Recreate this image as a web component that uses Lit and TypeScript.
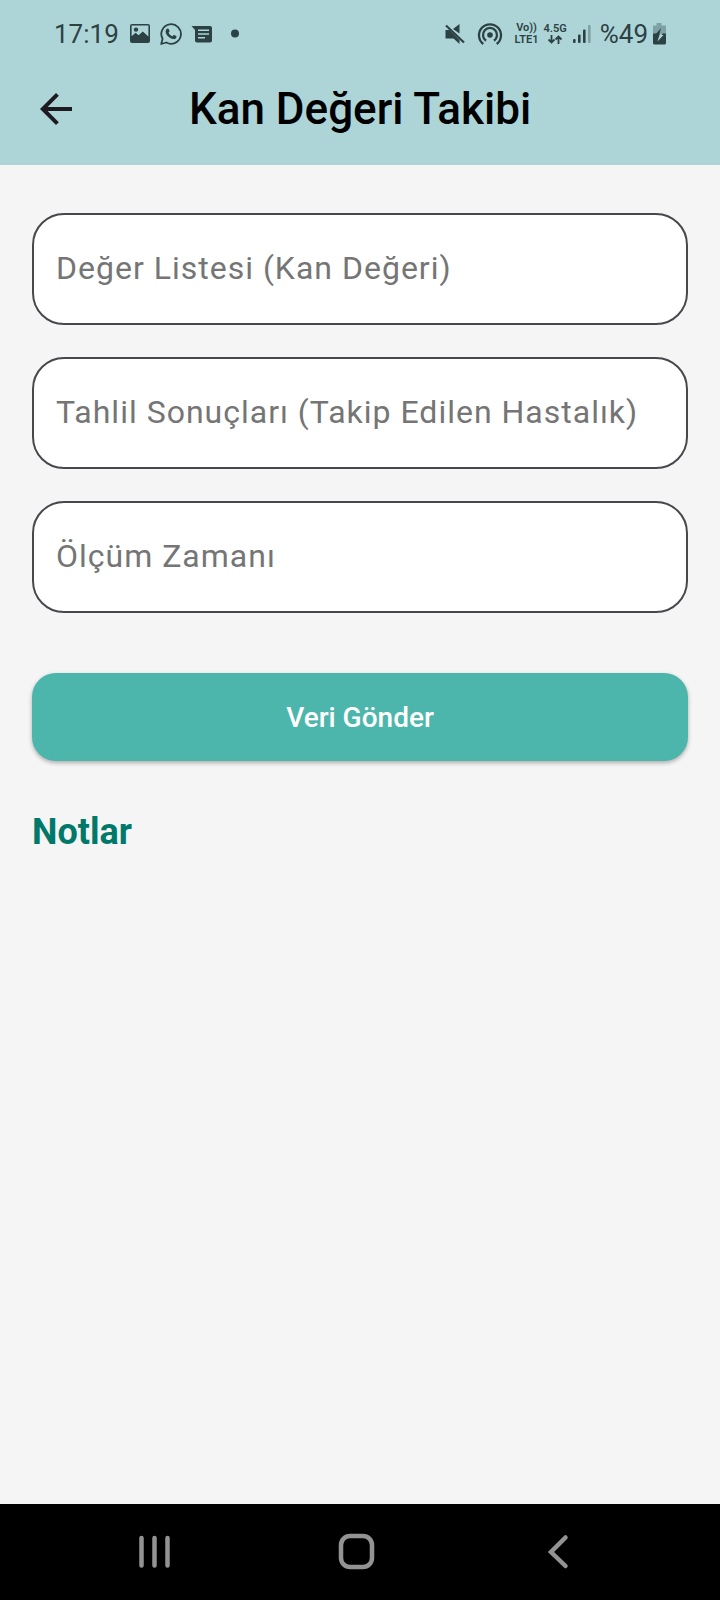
import { LitElement, html, css, svg } from "lit";
import { customElement, property } from "lit/decorators.js";

@customElement("status-bar")
export class StatusBar extends LitElement {
  @property() time = "17:19";
  @property({ type: Number }) battery = 49;

  static styles = css`
    :host {
      display: flex;
      justify-content: space-between;
      padding: 15px 53px 0 54px;
      color: #2c4144;
    }
    .group {
      display: flex;
      align-items: center;
      height: 38px;
    }
    .left {
      gap: 9px;
    }
    .right {
      gap: 12px;
    }
    .value {
      padding-right: 1px;
      font-size: 26px;
      line-height: 38px;
    }
    .cluster {
      display: flex;
      align-items: center;
      gap: 5px;
    }
    .power {
      display: flex;
      align-items: center;
      gap: 3px;
    }
    .reception {
      gap: 8px;
    }
    .stack {
      display: flex;
      flex-direction: column;
      align-items: center;
      font-weight: 600;
      font-size: 11px;
      line-height: 12px;
    }
    svg {
      display: block;
      fill: currentColor;
    }
    .line {
      fill: none;
      stroke: currentColor;
    }
    .faint {
      opacity: 0.35;
    }
    .bolt {
      fill: #add5d7;
    }
  `;

  render() {
    return html`
      <div class="group left">
        <span class="value">${this.time}</span>
        <svg width="22" height="22" viewBox="0 0 22 22" aria-hidden="true">
          <path
            fill-rule="evenodd"
            d="M3 1h16a2 2 0 0 1 2 2v15a2 2 0 0 1-2 2H3a2 2 0 0 1-2-2V3a2 2 0 0 1 2-2zm-.4 1.6v10.6l4-3.400 3 2.400 4.200-3.800 5.600 5V2.600z"
          />
          <circle cx="7" cy="6.600" r="2.200" />
        </svg>
        <svg width="22" height="22" viewBox="0 0 22 22" aria-hidden="true">
          <path
            class="line"
            stroke-width="1.800"
            stroke-linejoin="round"
            d="M1.200 21l1.400-5.200A9.800 9.800 0 1 1 6.300 19.500z"
          />
          <path
            d="M7.400 5.500c.5-.2 1-.1 1.300.5l.8 1.900c.1.400 0 .7-.9 1.800.9 1.700 2.200 2.800 3.900 3.500 1.100-1.300 1.300-1.400 1.700-1.200l2 1c.4.200.4.500.3 1-.4 1.700-1.800 2.300-3.200 2.100-4.200-.8-7.400-4-7.700-7.300 0-1.500.7-2.700 1.800-3.300z"
          />
        </svg>
        <svg width="22" height="20" viewBox="0 0 22 20" aria-hidden="true">
          <path
            fill-rule="evenodd"
            d="M.5 2H19a2 2 0 0 1 2 2v12.500a2 2 0 0 1-2 2H6a2 2 0 0 1-2-2V6zM7 5.500v1.600h11V5.500zm0 3.700v1.600h11V9.200zm0 3.700v1.600h7v-1.600z"
          />
        </svg>
        <svg width="26" height="20" viewBox="0 0 26 20" aria-hidden="true">
          <circle cx="13" cy="9.500" r="4" />
        </svg>
      </div>
      <div class="group right">
        <svg width="20" height="22" viewBox="0 0 20 22" aria-hidden="true">
          <path d="M.5 7h4l10 10v4l-6-5.500h-8zM8 6l6.500-5v9.500z" />
          <path class="line" stroke-width="2.200" d="M1 2.500l18 17" />
        </svg>
        <svg width="26" height="24" viewBox="0 0 26 24" aria-hidden="true">
          <circle cx="13" cy="13" r="2.800" />
          <path
            class="line"
            stroke-width="2.300"
            d="M9 18.700a7 7 0 1 1 8 0M6.300 22a11 11 0 1 1 13.400 0"
          />
        </svg>
        <div class="group reception">
          <div class="cluster">
            <div class="stack"><span>Vo))</span><span>LTE1</span></div>
            <div class="stack">
              <span>4.5G</span>
              <svg width="16" height="10" viewBox="0 0 16 10" aria-hidden="true">
                <path
                  class="line"
                  stroke-width="1.800"
                  d="M4.500 0v7.500M1.500 4.500l3 3 3-3M11.500 9V1.500M8.500 4.500l3-3 3 3"
                />
              </svg>
            </div>
            <svg width="20" height="20" viewBox="0 0 20 20" aria-hidden="true">
              <rect x="1" y="15" width="2.600" height="4" rx="1" />
              <rect x="6" y="10.500" width="2.600" height="8.500" rx="1" />
              <rect x="11" y="5.500" width="2.600" height="13.500" rx="1" />
              <rect class="faint" x="16" y="1" width="2.600" height="18" rx="1" />
            </svg>
          </div>
          <div class="power">
            <span class="value">%${this.battery}</span>
            <svg width="15" height="22" viewBox="0 0 15 22" aria-hidden="true">
              <path class="faint" d="M4.500 0h5v2.500H14V11H1V2.500h3.500z" />
              <path d="M1 10.500h13V20a1.500 1.500 0 0 1-1.500 1.500h-10A1.500 1.500 0 0 1 1 20z" />
              <path d="M9 5l-6 7h4z" />
              <path class="bolt" d="M10.500 10.500H8L5.500 18.500l6-6.500H9.500z" />
            </svg>
          </div>
        </div>
      </div>
    `;
  }
}

@customElement("system-nav")
export class SystemNav extends LitElement {
  static styles = css`
    :host {
      display: grid;
      grid-template-columns: repeat(3, 1fr);
      height: 96px;
      padding: 0 60px 0 54px;
      background: #000;
    }
    button {
      display: flex;
      align-items: center;
      justify-content: center;
      padding: 0;
      border: 0;
      background: none;
      color: #939393;
    }
    svg {
      fill: none;
      stroke: currentColor;
      stroke-linecap: round;
    }
  `;

  render() {
    const keys = [
      {
        label: "Son uygulamalar",
        shape: svg`<path stroke-width="4.500" d="M6.500 6v27.500M19.500 6v27.500M32.500 6v27.500" />`,
      },
      {
        label: "Ana ekran",
        shape: svg`<rect x="4" y="4" width="31" height="31" rx="9" stroke-width="4.500" />`,
      },
      {
        label: "Geri",
        shape: svg`<path stroke-width="4.500" d="M26.500 5.500L12 20l14.500 14" />`,
      },
    ];
    return keys.map(
      (key) => html`
        <button type="button" aria-label=${key.label}>
          <svg width="40" height="40" viewBox="0 0 40 40">${key.shape}</svg>
        </button>
      `
    );
  }
}

@customElement("app-root")
export class AppRoot extends LitElement {
  static styles = css`
    :host {
      display: flex;
      flex-direction: column;
      min-height: 100vh;
      background: #f5f5f5;
      font-family: Roboto, sans-serif;
    }
    header {
      background: #add5d7;
    }
    .bar {
      display: grid;
      grid-template-columns: 1fr auto 1fr;
      align-items: center;
      height: 112px;
      padding: 0 32px;
    }
    .back {
      display: flex;
      justify-self: start;
      padding: 0;
      border: 0;
      background: none;
      color: #1d1b20;
    }
    .back svg {
      fill: currentColor;
    }
    h1 {
      margin: 0;
      font-size: 44px;
      line-height: 52px;
      font-weight: 500;
      color: #000;
    }
    main {
      flex: 1;
      padding: 48px 32px;
    }
    form {
      display: flex;
      flex-direction: column;
      gap: 32px;
    }
    input {
      box-sizing: border-box;
      width: 100%;
      height: 112px;
      margin: 0;
      padding: 0 22px 2px;
      border: 2px solid #49474d;
      border-radius: 32px;
      background: #fff;
      color: #1d1b20;
      font-family: inherit;
      font-size: 32px;
      letter-spacing: 1px;
      outline: none;
    }
    input::placeholder {
      color: #757575;
      opacity: 1;
    }
    .send {
      height: 88px;
      margin-top: 28px;
      padding: 0 32px;
      border: 0;
      border-radius: 24px;
      background: #4db6ac;
      box-shadow: 0 2px 4px rgba(0, 0, 0, 0.3);
      color: #fff;
      font-family: inherit;
      font-size: 28px;
      font-weight: 500;
    }
    h2 {
      margin: 50px 0 0;
      font-size: 36px;
      line-height: 42px;
      font-weight: 700;
      color: #00796b;
    }
  `;

  private fields = [
    { name: "values", label: "Değer Listesi (Kan Değeri)" },
    { name: "results", label: "Tahlil Sonuçları (Takip Edilen Hastalık)" },
    { name: "time", label: "Ölçüm Zamanı" },
  ];

  private submit(event: Event) {
    event.preventDefault();
  }

  render() {
    return html`
      <header>
        <status-bar></status-bar>
        <div class="bar">
          <button class="back" type="button" aria-label="Geri">
            <svg width="48" height="48" viewBox="0 0 24 24">
              <path d="M20 11H7.830l5.590-5.590L12 4l-8 8 8 8 1.410-1.410L7.830 13H20z" />
            </svg>
          </button>
          <h1>Kan Değeri Takibi</h1>
        </div>
      </header>
      <main>
        <form @submit=${this.submit}>
          ${this.fields.map(
            (field) => html`
              <input
                type="text"
                name=${field.name}
                aria-label=${field.label}
                placeholder=${field.label}
              />
            `
          )}
          <button class="send" type="submit">Veri Gönder</button>
        </form>
        <h2>Notlar</h2>
      </main>
      <system-nav></system-nav>
    `;
  }
}
